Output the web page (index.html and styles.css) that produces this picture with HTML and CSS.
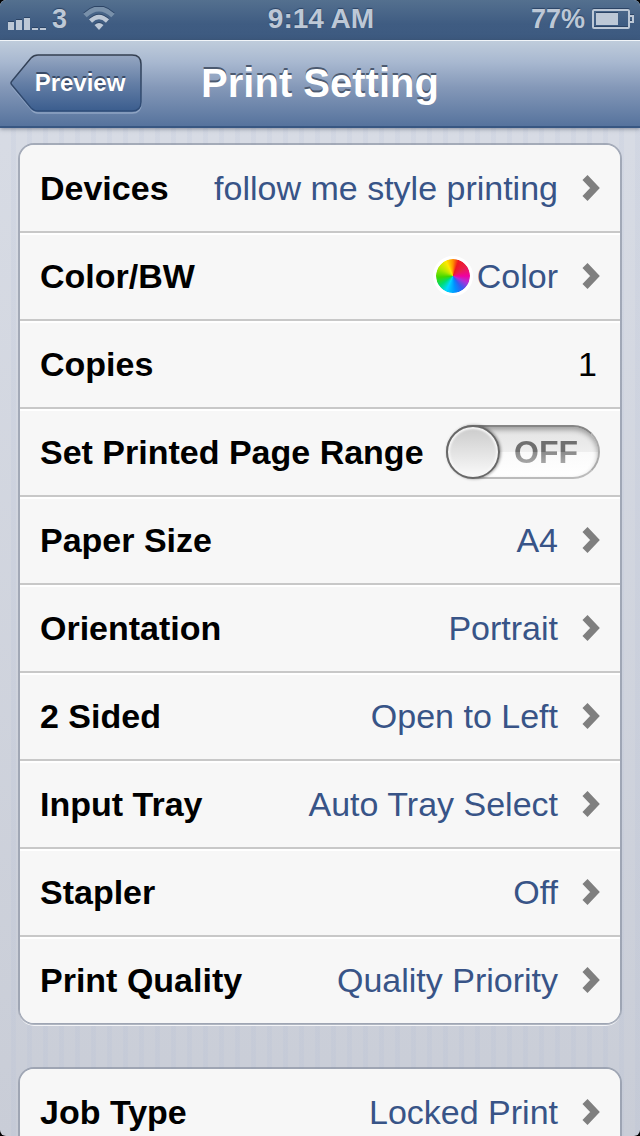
FILE: index.html
```html
<!DOCTYPE html>
<html lang="en">
<head>
<meta charset="utf-8">
<meta name="viewport" content="width=device-width">
<title>Print Setting</title>
<link rel="stylesheet" href="styles.css">
</head>
<body>
<svg class="defs" aria-hidden="true">
  <symbol id="chevron" viewBox="0 0 18 26"><path d="M3 2.5 L13 13 L3 23.500" fill="none" stroke="#7f7f7f" stroke-width="7"/></symbol>
</svg>
<div class="app">
  <div class="status">
    <div class="status-left">
      <svg class="signal" width="38" height="14" viewBox="0 0 38 14" fill="#bdc8d6" aria-hidden="true"><path d="M0 6h6v8H0zM8 4h6v10H8zM16 2h6v12h-6zM24 12h6v2h-6zM32 12h6v2h-6z"/></svg>
      <span>3</span>
      <svg class="wifi" width="32" height="24" viewBox="0 0 32 24" fill="none" stroke="#bdc8d6" aria-hidden="true"><path d="M2 8.500Q16-4.500 30 8.500" stroke="#7890aa" stroke-width="5"/><path d="M7.500 14Q16 6 24.500 14" stroke-width="4.500"/><path d="M11.500 18Q16 14 20.500 18L16 23Z" fill="#bdc8d6" stroke="none"/></svg>
    </div>
    <span class="clock">9:14 AM</span>
    <div class="status-right">
      <span>77%</span>
      <svg class="battery" width="42" height="20" viewBox="0 0 42 20" fill="none" stroke="#bdc8d6" stroke-width="2" aria-hidden="true"><rect x="1" y="1" width="36" height="18" rx="1"/><path d="M38 7h3v6h-3"/><path d="M4 4h22v12H4z" fill="#bdc8d6" stroke="none"/></svg>
    </div>
  </div>
  <header class="navbar">
    <button class="back" type="button">
      <svg class="back-shape" viewBox="0 0 132 60" aria-hidden="true">
        <defs><linearGradient id="back-fill" x1="0" y1="0" x2="0" y2="1"><stop offset="0" stop-color="#96a7c2"/><stop offset=".5" stop-color="#657fa6"/><stop offset="1" stop-color="#3b5d8e"/></linearGradient>
        <linearGradient id="back-edge" x1="0" y1="0" x2="0" y2="1"><stop offset="0" stop-color="#343f50"/><stop offset="1" stop-color="#2e4c78"/></linearGradient></defs>
        <path d="M28 3H122Q131 3 131 12V50Q131 59 122 59H28Q24 59 21 55L3 34Q1 31 3 28L21 6Q24 3 28 3Z" fill="none" stroke="#8fa4c3" stroke-width="1.500"/>
        <path d="M28 1H122Q131 1 131 10V48Q131 57 122 57H28Q24 57 21 54L2 31Q0 29 2 27L21 4Q24 1 28 1Z" fill="url(#back-fill)" stroke="url(#back-edge)" stroke-width="1.500"/>
      </svg>
      <span class="back-text">Preview</span>
    </button>
    <h1 class="title">Print Setting</h1>
  </header>
  <main class="content">
    <div class="card">
      <button class="row" type="button"><span class="label">Devices</span><span class="value">follow me style printing</span><svg class="chevron" aria-hidden="true"><use href="#chevron"/></svg></button>
      <button class="row" type="button"><span class="label">Color/BW</span><span class="value"><span class="wheel"></span>Color</span><svg class="chevron" aria-hidden="true"><use href="#chevron"/></svg></button>
      <div class="row"><label class="label" for="copies">Copies</label><input class="copies" id="copies" type="text" inputmode="numeric" value="1"></div>
      <div class="row"><label class="label" for="range">Set Printed Page Range</label><span class="switch"><input class="switch-input" id="range" type="checkbox" role="switch"><span class="switch-text" aria-hidden="true">OFF</span></span></div>
      <button class="row" type="button"><span class="label">Paper Size</span><span class="value">A4</span><svg class="chevron" aria-hidden="true"><use href="#chevron"/></svg></button>
      <button class="row" type="button"><span class="label">Orientation</span><span class="value">Portrait</span><svg class="chevron" aria-hidden="true"><use href="#chevron"/></svg></button>
      <button class="row" type="button"><span class="label">2 Sided</span><span class="value">Open to Left</span><svg class="chevron" aria-hidden="true"><use href="#chevron"/></svg></button>
      <button class="row" type="button"><span class="label">Input Tray</span><span class="value">Auto Tray Select</span><svg class="chevron" aria-hidden="true"><use href="#chevron"/></svg></button>
      <button class="row" type="button"><span class="label">Stapler</span><span class="value">Off</span><svg class="chevron" aria-hidden="true"><use href="#chevron"/></svg></button>
      <button class="row" type="button"><span class="label">Print Quality</span><span class="value">Quality Priority</span><svg class="chevron" aria-hidden="true"><use href="#chevron"/></svg></button>
    </div>
    <div class="card">
      <button class="row" type="button"><span class="label">Job Type</span><span class="value">Locked Print</span><svg class="chevron" aria-hidden="true"><use href="#chevron"/></svg></button>
    </div>
  </main>
</div>
</body>
</html>
```
FILE: styles.css
```css
*,
*::before {
  box-sizing: border-box;
}

body {
  margin: 0;
  background: #000;
  font-family: "Liberation Sans", Arial, sans-serif;
}

button,
input {
  margin: 0;
  font: inherit;
  color: inherit;
}

.defs {
  position: absolute;
  width: 0;
  height: 0;
}

.app {
  display: flex;
  flex-direction: column;
  height: 100vh;
  overflow: hidden;
  border-radius: 6px;
  background:
    repeating-linear-gradient(90deg, transparent 0 11px, rgba(160, 175, 210, 0.1) 11px 16px),
    linear-gradient(#d9dde6, #c9cdd7);
}

.status {
  display: grid;
  grid-template-columns: 1fr auto 1fr;
  align-items: center;
  height: 40px;
  padding: 0 6px 2px 8px;
  background: linear-gradient(#54708f, #3f5c82 60%, #3d5a80);
  color: #bdc8d6;
  font-size: 27px;
  font-weight: bold;
  line-height: 36px;
  text-shadow: 0 -1px 1px #2c4465;
}

.clock {
  font-size: 28px;
}

.status-left,
.status-right {
  display: flex;
  align-items: center;
}

.status-left {
  gap: 6px;
}

.status-right {
  justify-content: flex-end;
  gap: 7px;
}

.signal {
  margin-top: 8px;
}

.wifi {
  margin-left: 10px;
}

.signal,
.wifi,
.battery {
  filter: drop-shadow(0 -1px 0 #2c4465);
}

.navbar {
  position: relative;
  z-index: 1;
  display: grid;
  grid-template-columns: 1fr auto 1fr;
  align-items: center;
  flex: none;
  height: 88px;
  padding: 0 10px;
  border-top: 1px solid #f1f5f9;
  border-bottom: 2px solid #385782;
  background: linear-gradient(#bfccdb, #a8b8d0 25%, #8498b8 55%, #56739d);
  box-shadow: 0 1px 4px rgba(50, 60, 80, 0.5);
}

.back {
  position: relative;
  justify-self: start;
  width: 132px;
  height: 60px;
  padding: 0 0 2px 8px;
  border: 0;
  background: none;
  color: #fff;
  font-size: 24px;
  font-weight: bold;
  text-shadow: 0 -2px 0 #394b67;
}

.back-shape {
  position: absolute;
  inset: 0;
  width: 100%;
  height: 100%;
}

.back-text {
  position: relative;
}

.title {
  margin: 0;
  padding-bottom: 2px;
  color: #fff;
  font-size: 40px;
  line-height: 48px;
  text-shadow: 0 -2px 0 #4c5a70;
}

.content {
  flex: 1;
  min-height: 0;
  padding: 15px 18px;
  overflow-y: auto;
  scrollbar-width: none;
}

.card {
  margin-bottom: 42px;
  overflow: hidden;
  border: 2px solid rgba(130, 138, 155, 0.6);
  border-radius: 16px;
  background: #f7f7f7;
  background-clip: padding-box;
  box-shadow: 0 2px 0 -1px #f3f4f7;
}

.row {
  display: flex;
  align-items: center;
  width: 100%;
  height: 88px;
  padding: 0 20px;
  border: 0;
  border-bottom: 2px solid #c8c8c8;
  background: #f7f7f7;
  box-shadow: inset 0 2px 0 #fff;
  color: #000;
  font-size: 34px;
  line-height: 40px;
  text-align: left;
  white-space: nowrap;
}

.row:first-child {
  box-shadow: none;
}

.row:last-child {
  height: 86px;
  border-bottom: 0;
}

.label {
  flex: none;
  font-weight: bold;
}

.value {
  display: flex;
  align-items: center;
  justify-content: flex-end;
  flex: 1;
  gap: 4px;
  color: #385487;
}

.chevron {
  width: 18px;
  height: 26px;
  margin-left: 24px;
}

.wheel {
  width: 40px;
  height: 40px;
  border: 3px solid #fff;
  border-radius: 50%;
  background: conic-gradient(#ff9000, #f01820 20deg, #e8204c 55deg, #f000a0 90deg, #b030d8 115deg, #3060f0 145deg, #0090ff 170deg, #00d8ff 205deg, #00dc70 235deg, #40d800 265deg, #b0e800 300deg, #ffe800 335deg, #ff9000) padding-box;
}

.copies {
  flex: 1;
  min-width: 0;
  height: 40px;
  padding: 0 3px;
  border: 0;
  background: none;
  text-align: right;
}

.switch {
  position: relative;
  flex: none;
  width: 154px;
  height: 54px;
  margin-left: auto;
}

.switch-input {
  appearance: none;
  display: block;
  width: 100%;
  height: 100%;
  border: 2px solid;
  border-color: #858585 #aaa #bbb;
  border-radius: 27px;
  background: linear-gradient(#e3e3e3, #eee 50%, #fafafa 50%, #fff);
  box-shadow: inset 0 3px 5px rgba(0, 0, 0, 0.3);
}

.switch-input::before {
  content: "";
  position: absolute;
  top: 0;
  left: 0;
  width: 54px;
  height: 54px;
  border: 2px solid #686868;
  border-radius: 50%;
  background: linear-gradient(#cbcbcb, #fafafa);
  box-shadow: inset 0 0 2px 2px #f6f6f6, 1px 0 3px rgba(0, 0, 0, 0.4);
}

.switch-text {
  position: absolute;
  top: 7px;
  left: 68px;
  background: linear-gradient(#6f6f6f 50%, #8a8a8a 50%, #a8a8a8 80%);
  background-clip: text;
  color: transparent;
  font-size: 32px;
  font-weight: bold;
  line-height: 40px;
  pointer-events: none;
}
```
